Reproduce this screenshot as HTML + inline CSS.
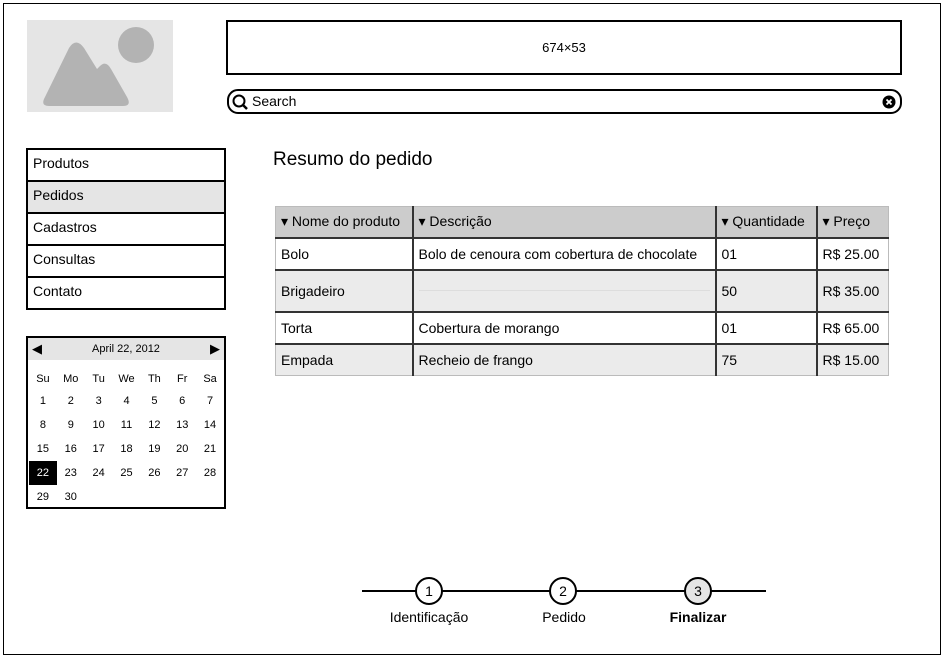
<!DOCTYPE html>
<html><head><meta charset="utf-8"><style>
*{box-sizing:border-box;margin:0;padding:0}
body{width:944px;height:658px;background:#fff;font-family:"Liberation Sans",Arial,sans-serif;color:#000;position:relative;overflow:hidden}
.abs{position:absolute}
.frame{left:3px;top:3px;width:938px;height:652px;border:1px solid #000}
.img{left:27px;top:20px;width:146px;height:92px;background:#e5e5e5}
.banner{left:226px;top:20px;width:676px;height:55px;border:2px solid #000;font-size:13px;text-align:center;line-height:51px}
.search{left:227px;top:89px;width:675px;height:25px;border:2px solid #000;border-radius:11px;font-size:14px;line-height:21px;padding-left:23px}
.nav{left:26px;top:148px;width:200px;border:2px solid #000}
.nav div{height:32px;border-top:2px solid #000;font-size:14px;padding-left:5px;line-height:26px}
.nav div:first-child{border-top:none;height:30px}
.cal{left:26px;top:336px;width:200px;height:173px;border:2px solid #000;font-size:11px}
.calh{height:22px;background:#e5e5e5;text-align:center;line-height:22px;position:relative}
.cal table{border-collapse:collapse;position:absolute;left:1px;top:31px}
.cal td{width:28.3px;height:24px;text-align:center;padding:0}
.cal tr:first-child td{height:20px}
.sel{background:#000;color:#fff}
h1{position:absolute;left:273px;top:149px;font-size:19px;font-weight:normal}
.tbl{left:275px;top:206px;border-collapse:collapse;font-size:14px}
.tbl td{border:2px solid #333;padding:0 5px;}
.tbl tr td:first-child{border-left:1px solid #bbb}
.tbl tr td:last-child{border-right:1px solid #bbb}
.tbl tr:first-child td{border-top:1px solid #bbb;background:#ccc}
.tbl tr:last-child td{border-bottom:1px solid #bbb}
.g td{background:#ebebeb}
.line{left:362px;top:590px;width:404px;height:2px;background:#000}
.c{width:28px;height:28px;border:2px solid #000;border-radius:50%;background:#fff;text-align:center;line-height:24px;font-size:14px;top:577px}
.lbl{top:609px;font-size:14px;text-align:center;width:120px}
</style></head><body>
<div class="abs frame"></div>
<div class="abs img"><svg width="146" height="92"><circle cx="109" cy="25" r="18" fill="#b3b3b3"/><path d="M18 77 Q13 86 22 86 L96 86 Q105 86 100 77 L84 49 Q79 40 73 46 L70 49 L57 28 Q49 17 42 28 Z" fill="#b3b3b3"/></svg></div>
<div class="abs banner">674×53</div>
<div class="abs search"><svg class="abs" style="left:2px;top:2px" width="18" height="18"><circle cx="8" cy="8" r="5.5" fill="none" stroke="#000" stroke-width="2"/><path d="M12 12 L16 16" stroke="#000" stroke-width="2.5"/></svg>Search<svg class="abs" style="right:4px;top:4px" width="14" height="14"><circle cx="7" cy="7" r="6.5" fill="#000"/><path d="M4.5 4.5 L9.5 9.5 M9.5 4.5 L4.5 9.5" stroke="#fff" stroke-width="1.8"/></svg></div>
<div class="abs nav"><div>Produtos</div><div style="background:#e5e5e5">Pedidos</div><div>Cadastros</div><div>Consultas</div><div>Contato</div></div>
<div class="abs cal"><div class="calh"><span style="position:absolute;left:4px;font-size:13px">◀</span>April 22, 2012<span style="position:absolute;right:4px;font-size:13px">▶</span></div>
<table>
<tr><td>Su</td><td>Mo</td><td>Tu</td><td>We</td><td>Th</td><td>Fr</td><td>Sa</td></tr>
<tr><td>1</td><td>2</td><td>3</td><td>4</td><td>5</td><td>6</td><td>7</td></tr>
<tr><td>8</td><td>9</td><td>10</td><td>11</td><td>12</td><td>13</td><td>14</td></tr>
<tr><td>15</td><td>16</td><td>17</td><td>18</td><td>19</td><td>20</td><td>21</td></tr>
<tr><td class="sel">22</td><td>23</td><td>24</td><td>25</td><td>26</td><td>27</td><td>28</td></tr>
<tr><td>29</td><td>30</td><td></td><td></td><td></td><td></td><td></td></tr>
</table></div>
<h1>Resumo do pedido</h1>
<table class="abs tbl">
<tr style="height:31px"><td style="width:137px">▾ Nome do produto</td><td style="width:303px">▾ Descrição</td><td style="width:101px">▾ Quantidade</td><td style="width:72px">▾ Preço</td></tr>
<tr style="height:32px"><td>Bolo</td><td>Bolo de cenoura com cobertura de chocolate</td><td>01</td><td>R$ 25.00</td></tr>
<tr class="g" style="height:42px"><td>Brigadeiro</td><td><div style="height:1px;background:#ddd"></div></td><td>50</td><td>R$ 35.00</td></tr>
<tr style="height:32px"><td>Torta</td><td>Cobertura de morango</td><td>01</td><td>R$ 65.00</td></tr>
<tr class="g" style="height:32px"><td>Empada</td><td>Recheio de frango</td><td>75</td><td>R$ 15.00</td></tr>
</table>
<div class="abs line"></div>
<div class="abs c" style="left:415px">1</div>
<div class="abs c" style="left:549px">2</div>
<div class="abs c" style="left:684px;background:#e5e5e5">3</div>
<div class="abs lbl" style="left:369px">Identificação</div>
<div class="abs lbl" style="left:504px">Pedido</div>
<div class="abs lbl" style="left:638px;font-weight:bold">Finalizar</div>
</body></html>
